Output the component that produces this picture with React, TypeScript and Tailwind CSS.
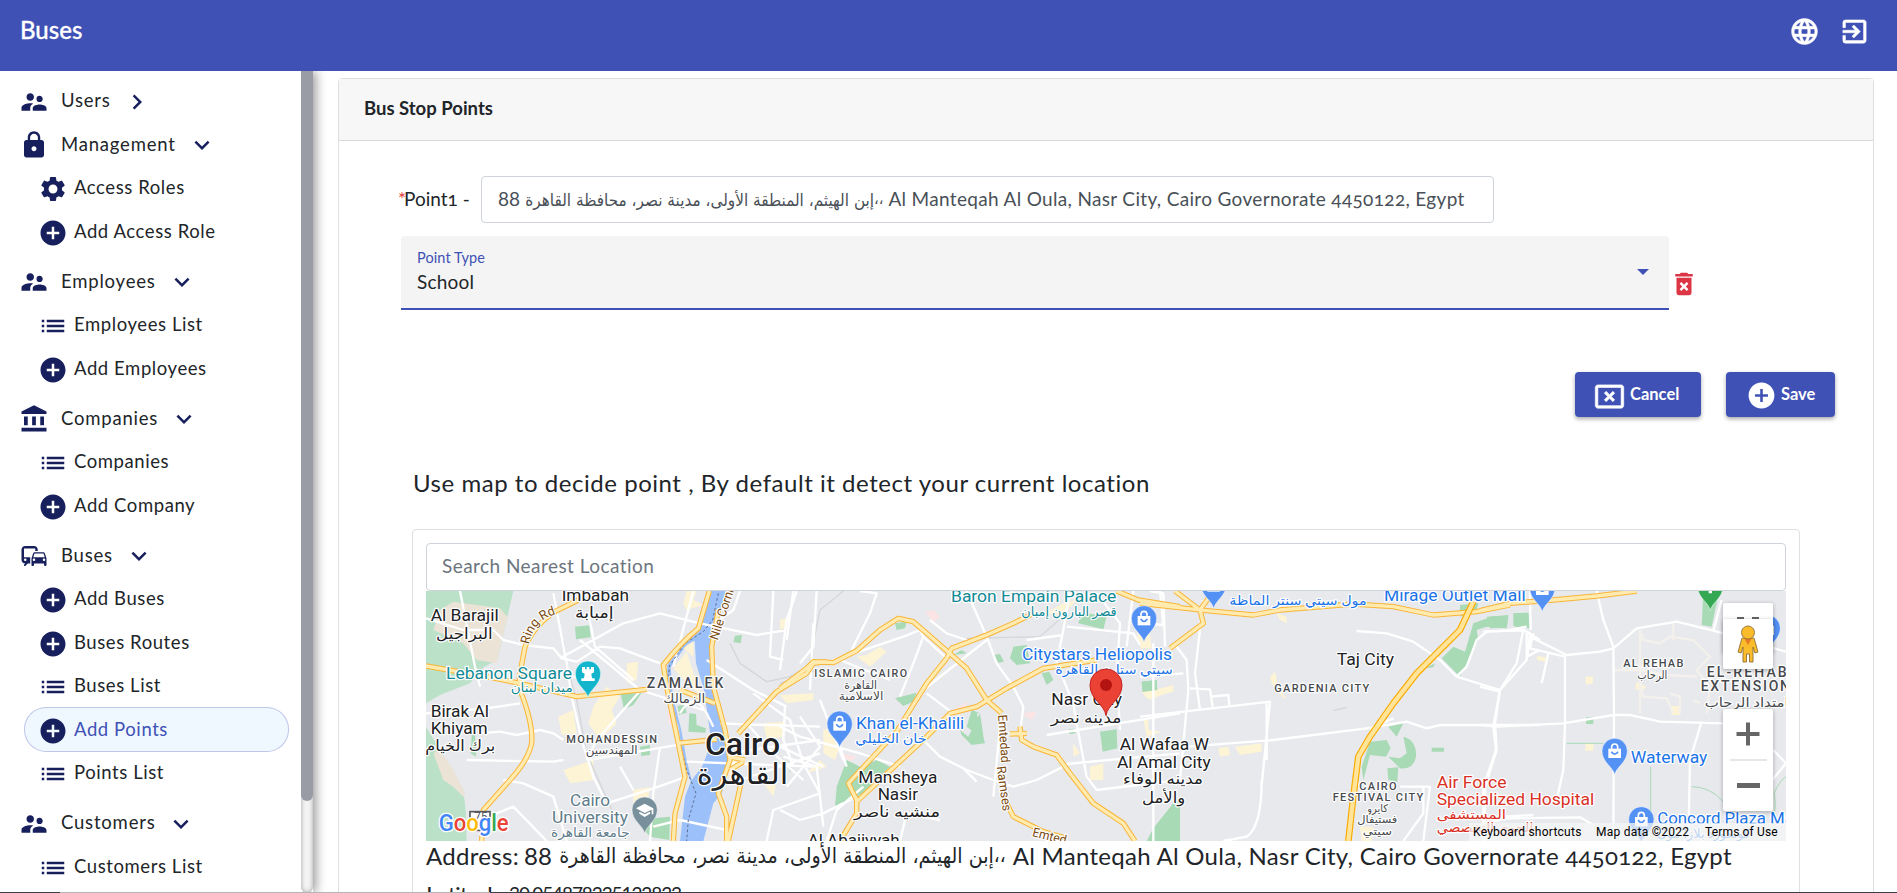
import React from "react";
import type { IconType } from "react-icons";
import {
  MdSupervisorAccount,
  MdLock,
  MdSettings,
  MdAddCircle,
  MdList,
  MdAccountBalance,
  MdCommute,
  MdExpandMore,
  MdChevronRight,
  MdLanguage,
  MdExitToApp,
  MdCancelPresentation,
  MdDeleteForever,
} from "react-icons/md";

type SubItem = { icon: IconType; label: string; active?: boolean };
type Group = { icon: IconType; label: string; open: boolean; items: SubItem[]; tight?: boolean };

const MENU: Group[] = [
  { icon: MdSupervisorAccount, label: "Users", open: false, items: [], tight: true },
  {
    icon: MdLock,
    label: "Management",
    open: true,
    tight: true,
    items: [
      { icon: MdSettings, label: "Access Roles" },
      { icon: MdAddCircle, label: "Add Access Role" },
    ],
  },
  {
    icon: MdSupervisorAccount,
    label: "Employees",
    open: true,
    items: [
      { icon: MdList, label: "Employees List" },
      { icon: MdAddCircle, label: "Add Employees" },
    ],
  },
  {
    icon: MdAccountBalance,
    label: "Companies",
    open: true,
    items: [
      { icon: MdList, label: "Companies" },
      { icon: MdAddCircle, label: "Add Company" },
    ],
  },
  {
    icon: MdCommute,
    label: "Buses",
    open: true,
    items: [
      { icon: MdAddCircle, label: "Add Buses" },
      { icon: MdAddCircle, label: "Buses Routes" },
      { icon: MdList, label: "Buses List" },
      { icon: MdAddCircle, label: "Add Points", active: true },
      { icon: MdList, label: "Points List" },
    ],
  },
  {
    icon: MdSupervisorAccount,
    label: "Customers",
    open: true,
    items: [{ icon: MdList, label: "Customers List" }],
  },
];

function Sidebar() {
  return (
    <aside className="z-10 flex h-[822px] w-[313px] shrink-0 bg-white shadow-[3px_0_10px_rgba(0,0,0,0.4)]">
      <nav className="h-full w-[301px] overflow-hidden pt-[8px] text-[18.5px] tracking-[0.8px] text-[#212529]">
        {MENU.map((g) => {
          const Chevron = g.open ? MdExpandMore : MdChevronRight;
          return (
            <div key={g.label} className={g.tight ? "" : "pt-[6.5px]"}>
              <div className="flex h-[43.5px] items-center pl-[19px]">
                <g.icon className="mt-[2px] size-[30px] text-[#17205c]" />
                <span className="-mt-[1px] ml-[12px] leading-[24px]">{g.label}</span>
                <Chevron className="ml-[11px] mt-[2px] size-[30px] text-[#17205c]" />
              </div>
              {g.items.map((it) => (
                <div
                  key={it.label}
                  className={
                    it.active
                      ? "ml-[25px] mr-[13px] flex h-[43.5px] items-center rounded-[21px] bg-[#eff7ff] pl-[12.5px] text-[#3f51b5] ring-1 ring-[#c0c6ea]"
                      : "flex h-[43.5px] items-center pl-[37.5px]"
                  }
                >
                  <it.icon className="mt-[3px] size-[30px] shrink-0 text-[#17205c]" />
                  <span className="-mt-[1px] ml-[6.5px] tracking-[0.58px] leading-[24px]">{it.label}</span>
                </div>
              ))}
            </div>
          );
        })}
      </nav>
      <div className="h-full w-[12px] rounded-b-md bg-[#f5f5f5] shadow-[inset_0_0_5px_#a0a0a0]">
        <div className="h-[730px] w-[12px] rounded-b-[6px] bg-[#9a9ca5]" />
      </div>
    </aside>
  );
}

const OFFSETS = [0, 1080, 2160, 3180];

const PARKS: string[] = [
  "M465 140L508 136 512 172 468 178ZM945 167L966 165 962 190 940 186ZM602 342L665 338 640 375 612 388ZM775 378L792 372 798 400 780 400ZM808 400L828 402 830 435 860 445 858 458 805 455ZM660 500L690 495 690 525 664 528ZM700 715L750 710 748 780 690 770 665 740ZM155 465L165 460 168 530 152 520ZM1105 545L1118 542 1110 580Z",
  "M345 355L410 338 400 365 370 378ZM200 540L240 560 290 540 330 560 250 640 165 678 170 620ZM540 450L565 470 600 400 590 400 615 490 575 495 545 465ZM575 390L600 400 612 480 560 440ZM345 130L380 125 375 145 350 150ZM905 97L980 110 970 148 895 130ZM700 200L740 195 750 250 710 255 690 235ZM785 280L808 275 820 300 800 315ZM640 225L660 222 672 245 655 248ZM1085 305L1130 300 1130 330 1088 335ZM960 455L1010 448 1012 505 968 515ZM865 448L886 446 886 460 868 462ZM1180 670L1200 660 1200 783 1105 783 1120 750ZM520 225L545 210 560 220Z",
  "M5 305L50 300 52 330 8 335ZM100 670L100 783 20 783 40 745ZM905 235L940 200 975 215 1000 130 1060 108 1105 112 1100 145 1040 140 1010 150 1015 180 960 290ZM1120 100L1165 100 1168 145 1120 138ZM690 485L740 480 752 505 738 530 690 525 670 600 665 560ZM790 470Q830 480 828 530 820 570 780 565L745 530 780 535 800 520ZM745 440L790 430 770 470ZM742 565L775 562 772 605 745 600ZM875 503L912 503 912 515 875 515ZM960 75L1015 70 1010 90 960 110ZM855 265L885 250 880 262Z",
  "M670 33L718 33 695 140 665 135ZM318 412L340 412 340 432 318 432ZM100 100L145 98 148 145 105 140ZM20 110L85 105 80 142 30 145Z",
];

const BLOCKS: string[] = [
  "M800 33L830 33 820 60 850 75 800 90 790 70ZM790 210L825 180 820 230ZM415 410L460 390 470 460 425 465ZM520 380L560 320 600 350 575 390 590 430 540 480 505 430ZM620 250L655 245 650 300 620 310ZM430 570L520 540 520 600 450 610ZM750 270L790 240 830 300 860 330 850 360 800 310ZM640 630L690 620 680 680 640 680ZM1030 430L1090 425 1090 470 1040 480ZM1030 610L1070 600 1060 650ZM920 480L955 560 930 620Z",
  "M230 230L260 225 300 200 320 215 270 260ZM0 120L30 110 20 140 0 150ZM130 450L160 440 180 500 165 540 130 520ZM930 560L970 550 970 600 930 600ZM1070 150L1110 150 1110 195 1075 190ZM1090 340L1180 315 1180 335 1120 350 1100 355ZM880 490L900 520 880 530ZM0 345L100 340 100 360 20 370ZM795 100L850 70 890 60 850 105ZM120 540L140 560 80 580Z",
  "M0 160L30 165 35 205 0 205ZM285 500L365 490 365 515 300 525ZM390 290L405 275 415 320 440 358 425 350 395 310ZM235 505L265 500 270 525 240 530ZM5 335L95 320 90 335 30 360ZM410 100L440 110 440 130 420 120ZM10 415L25 420 25 450 65 455 20 470ZM660 740L700 740 695 783 665 783Z",
  "M170 228L198 232 195 246 172 240ZM316 290L340 290 338 310 318 314ZM470 305L498 320 485 335 465 325ZM573 378L603 378 600 405 575 405ZM316 490L340 490 340 512 316 512Z",
];

const MINOR: string[] = [
  "M18 115L130 150 220 150 250 180 310 195 400 205 425 235 470 245 540 200 600 205 720 250 M400 40L440 250 455 350 485 480 520 590 555 660 M420 235L610 130 720 100 840 130 1010 165 1100 150 M18 400L200 385 300 370 M180 460L240 455 290 465 360 450 400 460 430 480 M140 540L400 545 430 540 M480 180L660 330 850 390 M505 100L525 200 640 300 M505 540L800 490 M660 333L530 480 500 540 M560 670L700 625 800 590 M720 500L700 640 690 783 M700 740L780 720 920 750 M820 33L760 260 M870 140L940 90 960 33 M860 240L1000 330 1100 380 M900 430L1200 440 M920 520L1200 480 M960 600L1200 520 M1060 33L1050 230 1090 240 M1130 33L1100 120 1080 270 M1000 340L1110 420 1150 550 1200 640 M980 430L1060 520 1150 600 M780 400Q820 330 860 400L880 440 M800 545L1180 560 M600 560L640 630 M180 720L280 680 380 783 M250 600L310 610 400 650 440 783 M120 33L165 260 180 320 M300 300L410 280 500 300 M1180 130L1170 330 M1040 783L1060 690 1200 640 M1095 380L1090 480 1120 560",
  "M240 33L290 40 270 100 215 210 M150 245L370 170 420 150 430 170 500 235 M450 120L500 160 560 180 M560 33L620 170 650 250 700 320 730 380 720 460 M870 33L850 150 830 250 880 370 890 430 920 590 950 630 1200 600 M860 140L1060 160 1080 195 M740 180L850 165 M950 40L1020 130 1010 280 1020 450 M1060 33L1040 200 M1140 33L1150 140 M800 465L1200 400 M860 552L1200 520 M430 170L400 250 360 350 M0 330L80 270 M0 440L60 470 240 520 360 560 M160 440L200 560 M120 360L190 540 M0 500L130 560 M60 410L120 500 20 620 M430 480L480 530 560 570 640 600 700 620 770 600 850 560 M550 565L590 605 M0 690L60 720 130 700 230 650 M140 783L170 690 250 620 M360 783L380 700 480 720 M110 33L100 200 60 250 M40 33L20 180 M440 340L520 400 M500 235L430 330 620 180 M180 240L330 300 M660 440L640 650 M10 530L110 560 130 740",
  "M190 60L165 280 180 390 M110 200L140 240 145 330 120 600 M0 410L390 365 365 615 M140 500L400 480 680 445 800 425 860 445 900 435 1080 435 1200 435 M650 153L740 160 820 185 900 240 950 290 1080 330 1065 430 1070 510 1035 620 1035 783 M150 325L210 328 218 380 M210 350L265 345 268 375 M365 600Q365 740 320 770L250 783 M1080 330L1130 250 1150 150 1200 180 M1150 150L1040 155 1010 180 980 260 950 290 M760 415L700 440 670 500 M780 620L870 620 850 783 M850 620L850 700 790 783 M30 33L70 40 75 200 M0 130L75 135 M40 190L40 783 M1110 150L1160 140 M1160 160L1160 230 1200 210 M380 365L380 540 M0 290L130 280 M940 710L1050 712 1180 705",
  "M350 33L370 120 400 200 402 410 400 783 M400 205L470 145 590 125 700 152 730 160 M400 205L360 215 260 225 150 170 M160 160L150 205 255 230 255 430 250 570 230 660 M205 220L185 310 M0 435L50 440 250 430 400 405 450 405 540 425 730 430 M665 425L630 540 625 783 M10 155L130 150 150 160 140 240 60 330 40 440 48 510 10 620 10 783 M700 152L725 60 M730 160L830 190 918 215 M880 510L918 550 860 620 M0 735L80 715 300 712 340 735 M0 320L60 335 M150 33L152 150",
];

const FAINT: string[] = [
  "M430 180L440 260 470 360 500 520 580 700 M930 190L960 250 1040 305 1110 290 1200 240",
  "M0 310L110 270 M190 33L120 90 90 240 M560 175L780 170 860 100",
  "M580 392L620 382",
  "",
];

const TRACKS: string[] = [
  "",
  "",
  "",
  "M480 150L490 180 540 190 570 170 640 180 690 230 650 270 690 320 680 400 M400 270L480 270 560 285 650 290 M480 310L490 350 560 355 580 400 M480 150L480 400 M580 130L580 180 M500 240L480 270 M640 360L660 370 M600 400L600 350 570 340",
];

const HIGHWAYS: string[] = [
  "M475 60L400 97Q340 140 315 200L298 290 300 330Q340 430 335 490 325 540 270 600L190 690 185 783 M18 258L200 290 300 310 470 350 680 328 M868 33L835 145Q780 190 730 255L740 320 750 370 775 490 795 590 765 700 760 783 M895 90L875 200 880 320 915 450 930 540 895 640 920 710 920 783 M780 330L885 370 M770 490L890 478 M955 460L1070 335 1160 280 1180 250 1220 245 M925 530L975 540 M965 600L925 783 M930 570L970 545",
  "M0 325L80 265 100 245 160 248 230 212 300 150 355 115 400 125 440 160 560 265 620 360 665 400 M500 235L515 205 620 165 700 130 760 100 M500 235L440 310 350 455 270 540 205 610 230 660 230 700 180 783 M230 665L440 470 510 400 590 380 680 325 790 265 950 240 M720 440L725 480 760 500 830 525 870 580 940 670 1030 730 1065 783 M690 462L740 460 M670 650L700 710 790 755 860 775 M1010 33L1075 60 1200 80",
  "M0 70L200 92 340 105 420 90 640 72 760 80 880 105 1010 95 1110 75 M105 33L180 90 190 130 90 205 M205 55L180 90 M1000 65L960 150 890 220 830 280 760 370 690 470 655 530 640 650 625 783",
  "M0 92L90 70 220 60 350 48 470 33",
];

const POIS: [number, number, string, string][] = [
  [504, 281, "#12b5cb", "rook"],
  [674, 689, "#78909c", "cap"],
  [1259, 431, "#5491f5", "bag"],
  [2172, 115, "#5491f5", "bag"],
  [2381, 14, "#5491f5", "bag"],
  [3367, 24, "#5491f5", "bag"],
  [3584, 513, "#5491f5", "bag"],
  [3664, 718, "#5491f5", "bag"],
  [3871, 20, "#34a853", "tree"],
  [4043, 144, "#5491f5", "bag"],
];

const GLYPHS: Record<string, string> = {
  rook: "M-18-20H-9V-13H-4V-20H4V-13H9V-20H18V-4L10 0 12 14H20V22H-20V14H-12L-10 0-18-4Z",
  cap: "M-26-4L0-18 26-4V14H21V0L0 10ZM-16 6L0 14 16 6V12L0 22-16 12Z",
  tree: "M0-10L18 12H5V20H-5V12H-18Z",
};

function Pin({ x, y, color, kind }: { x: number; y: number; color: string; kind: string }) {
  return (
    <g transform={`translate(${x} ${y})`}>
      <path d="M0 72C-4 48-38 34-38 0A38 38 0 1 1 38 0C38 34 4 48 0 72Z" fill={color} stroke="#ffffff" strokeOpacity=".5" strokeWidth="3" />
      {kind === "bag" ? (
        <g>
          <path d="M-9-5V-12A9 9 0 0 1 9-12V-5" fill="none" stroke="#fff" strokeWidth="5" />
          <path d="M-19-7H19V21H-19Z" fill="#fff" />
          <path d="M-10 2Q0 17 10 2" fill="none" stroke={color} strokeWidth="5" />
        </g>
      ) : (
        <path d={GLYPHS[kind]} fill="#fff" />
      )}
    </g>
  );
}

/* x, baseline, width, size, color, text, weight */
type Label = [number, number, number, number, string, string, number?];
const INK = "#202124";
const GREY = "#46494d";
const TEAL = "#118a96";
const BLUE = "#1a73e8";
const RED = "#d93025";

const LABELS: Label[] = [
  [32, 124, 204, 48, INK, "Al Barajil"],
  [48, 176, 170, 46, INK, "البراجيل"],
  [425, 62, 202, 48, INK, "Imbabah"],
  [465, 114, 116, 46, INK, "إمبابة"],
  [78, 296, 378, 47, TEAL, "Lebanon Square"],
  [272, 336, 186, 38, TEAL, "ميدان لبنان"],
  [680, 325, 230, 42, GREY, "ZAMALEK", 500],
  [730, 368, 126, 38, GREY, "الزمالك"],
  [32, 411, 175, 48, INK, "Birak Al"],
  [32, 463, 171, 48, INK, "Khiyam"],
  [16, 512, 210, 46, INK, "برك الخيام"],
  [439, 489, 272, 33, GREY, "MOHANDESSIN", 500],
  [497, 522, 156, 34, GREY, "المهندسين"],
  [855, 524, 225, 92, INK, "Cairo", 500],
  [830, 612, 275, 88, INK, "القاهرة"],
  [450, 677, 120, 47, "#607d8b", "Cairo"],
  [396, 729, 228, 47, "#607d8b", "University"],
  [393, 772, 236, 38, "#607d8b", "جامعة القاهرة"],
  [1593, 66, 496, 47, TEAL, "Baron Empain Palace"],
  [1804, 108, 286, 40, TEAL, "قصر البارون إمبان"],
  [1183, 291, 278, 32, GREY, "ISLAMIC CAIRO", 500],
  [1273, 326, 98, 34, GREY, "القاهرة"],
  [1256, 359, 134, 34, GREY, "الاسلامية"],
  [1308, 447, 325, 48, BLUE, "Khan el-Khalili"],
  [1306, 488, 214, 38, BLUE, "خان الخليلي"],
  [1315, 609, 237, 48, INK, "Mansheya"],
  [1373, 661, 121, 48, INK, "Nasir"],
  [1302, 711, 258, 46, INK, "منشيه ناصر"],
  [1163, 798, 276, 48, INK, "Al Abajiyyah"],
  [1806, 239, 450, 48, BLUE, "Citystars Heliopolis"],
  [1906, 282, 352, 38, BLUE, "سيتي ستارز القاهرة"],
  [1894, 376, 212, 48, INK, "Nasr City"],
  [1892, 430, 212, 46, INK, "مدينه نصر"],
  [2099, 510, 268, 48, INK, "Al Wafaa W"],
  [2091, 563, 281, 48, INK, "Al Amal City"],
  [2109, 612, 240, 46, INK, "مدينه الوفاء"],
  [2166, 668, 130, 46, INK, "والأمل"],
  [2428, 74, 412, 38, BLUE, "مول سيتي سنتر الماظة"],
  [2892, 63, 425, 47, BLUE, "Mirage Outlet Mall"],
  [2750, 256, 172, 48, INK, "Taj City"],
  [2563, 336, 285, 33, GREY, "GARDENIA CITY", 500],
  [2818, 629, 112, 33, GREY, "CAIRO", 500],
  [2738, 663, 272, 33, GREY, "FESTIVAL CITY", 500],
  [2842, 696, 62, 32, GREY, "كايرو"],
  [2812, 730, 120, 32, GREY, "فستيفال"],
  [2828, 764, 88, 32, GREY, "سيتي"],
  [3050, 623, 210, 48, RED, "Air Force"],
  [3050, 675, 473, 48, RED, "Specialized Hospital"],
  [3050, 716, 208, 38, RED, "المستشفى"],
  [3050, 756, 290, 38, RED, "الجوي التخصصي"],
  [3610, 262, 180, 33, GREY, "AL REHAB", 500],
  [3652, 296, 90, 34, GREY, "الرحاب"],
  [3860, 290, 240, 42, GREY, "EL-REHAB", 500],
  [3842, 334, 268, 42, GREY, "EXTENSION", 500],
  [3854, 380, 252, 38, GREY, "امتداد الرحاب"],
  [3632, 549, 230, 48, BLUE, "Waterway"],
  [3712, 732, 434, 47, BLUE, "Concord Plaza Mall"],
  [3712, 774, 278, 38, BLUE, "كونكورد بلازا مول"],
];

function Layer({ paths, ...rest }: { paths: string[] } & React.SVGProps<SVGGElement>) {
  return (
    <g {...rest}>
      {paths.map((d, i) => (
        <path key={i} d={d} transform={`translate(${OFFSETS[i]} 0)`} />
      ))}
    </g>
  );
}

function MapCanvas() {
  return (
    <svg viewBox="18 33 4080 750" className="block h-[250px] w-[1360px] font-['Roboto','DejaVu_Sans',sans-serif]">
      <rect x="18" y="33" width="4080" height="750" fill="#e8e9ed" />
      <path d="M18 33H280L262 110 232 240 190 262 150 310 60 345 18 370ZM18 440L60 510 90 560 130 630 138 700 140 783H18Z" fill="#bbe1c9" />
      <path d="M100 65L240 85 262 110 230 250 170 240 130 190 40 150 60 90ZM40 520L60 510 100 570 135 640 130 650 100 620 70 600Z" fill="#ebe3d6" />
      <Layer paths={BLOCKS} fill="#fdf3d5" />
      <Layer paths={PARKS} fill="#a8dab5" />
      <path d="M1515 95L1540 90 1560 110 1540 125ZM1610 385L1650 360 1620 400ZM1805 400L1850 395 1835 420ZM740 390L755 400 758 440 745 430ZM1260 520L1310 530 1290 545Z" fill="#fce4e4" />
      <path
        d="M868 33H918L895 120 878 150 872 250 885 330 905 430 922 480 928 560 905 640 880 670 850 783H780L795 650 812 605 790 540 775 440 750 370 740 300 742 255 790 190 835 155 850 110Z"
        fill="#9cc0f9"
      />
      <path d="M752 262L800 195 824 182 828 250 852 330 862 400 872 470 862 520 846 560 815 600 800 540 784 450 759 350Z" fill="#e8e9ed" />
      <path d="M808 400L828 402 830 435 858 445 856 458 805 455ZM772 378L794 374 800 398 778 404Z" fill="#a8dab5" />
      <path d="M760 265L800 215 824 290 848 350 800 310ZM790 205L820 184 820 230Z" fill="#fdf3d5" />
      <Layer paths={TRACKS} fill="none" stroke="#f4f1ec" strokeWidth="7" />
      <Layer paths={FAINT} fill="none" stroke="#d4d6da" strokeWidth="4" />
      <Layer paths={MINOR} fill="none" stroke="#ffffff" strokeWidth="7" strokeLinejoin="round" />
      <path d="M3440 490H3550M3692 560V720M3815 620Q3870 620 3910 665M4062 640Q4080 600 4098 590M4062 640Q4070 670 4060 720" fill="none" stroke="#a8dab5" strokeWidth="3" />
      <path d="M895 40L878 120 850 155 795 190 748 258 745 320 765 430 800 570 828 640 805 720 800 783" fill="none" stroke="#5f6f92" strokeWidth="3" strokeDasharray="8 7" />
      <Layer paths={HIGHWAYS} fill="none" stroke="#f9b536" strokeWidth="16" strokeLinejoin="round" />
      <Layer paths={HIGHWAYS} fill="none" stroke="#ffebb0" strokeWidth="10" strokeLinejoin="round" />
      <path d="M3160 65L3120 150 3050 220 2990 280 2920 370 2850 470 2815 530 2800 650 2785 783" fill="none" stroke="#f9ab00" strokeWidth="20" strokeLinejoin="round" />
      <path d="M3160 65L3120 150 3050 220 2990 280 2920 370 2850 470 2815 530 2800 650 2785 783" fill="none" stroke="#ffe49a" strokeWidth="13" strokeLinejoin="round" />
      <rect x="150" y="695" width="60" height="56" fill="#fff" stroke="#55595e" strokeWidth="5" />
      {POIS.map(([x, y, color, kind]) => (
        <Pin key={`${x}-${y}`} x={x} y={y} color={color} kind={kind} />
      ))}
      <g paintOrder="stroke" stroke="#ffffff" strokeWidth="7" strokeLinejoin="round">
        <text x="162" y="724" fontSize="36" fill="#55595e" strokeWidth="0">75</text>
        {LABELS.map(([x, y, w, s, c, t, wt]) => (
          <text
            key={`${x}-${y}`}
            x={x}
            y={y}
            fontSize={s}
            fill={c}
            fontWeight={wt ?? 400}
            textLength={w}
            lengthAdjust={wt && s < 60 ? "spacing" : "spacingAndGlyphs"}
          >
            {t}
          </text>
        ))}
        <path id="ring-road-label" d="M327 194Q340 125 400 105" fill="none" stroke="none" />
        <g fill="#7a4a12" fontSize="38">
          <text>
            <textPath href="#ring-road-label">Ring Rd</textPath>
          </text>
          <text transform="translate(893 182) rotate(-72)" textLength="158" lengthAdjust="spacingAndGlyphs">Nile Corni</text>
          <text transform="translate(1734 405) rotate(86)" textLength="144" lengthAdjust="spacingAndGlyphs">Emtedad</text>
          <text transform="translate(1730 560) rotate(82)" textLength="136" lengthAdjust="spacingAndGlyphs">Ramses</text>
          <text transform="translate(1835 768) rotate(14)" textLength="104" lengthAdjust="spacingAndGlyphs">Emted</text>
        </g>
        <text x="56" y="753" fontSize="70" fontWeight="500" strokeWidth="8" textLength="210" lengthAdjust="spacingAndGlyphs">
          <tspan fill="#4285f4">G</tspan>
          <tspan fill="#ea4335">o</tspan>
          <tspan fill="#fbbc04">o</tspan>
          <tspan fill="#4285f4">g</tspan>
          <tspan fill="#34a853">l</tspan>
          <tspan fill="#ea4335">e</tspan>
        </text>
      </g>
      <g transform="translate(2058 315)">
        <path d="M0 92C-4 58-48 44-48 0A48 48 0 1 1 48 0C48 44 4 58 0 92Z" fill="#ea4335" stroke="#c5221f" strokeWidth="3" />
        <circle r="18" fill="#b31412" />
      </g>
    </svg>
  );
}

function MapControls() {
  return (
    <>
      <div className="absolute left-[1297px] top-[12px] h-[50px] w-[50px] rounded-[2px] bg-white shadow-[0_1px_4px_rgba(0,0,0,0.3)]">
        <div className="mt-[14px] flex justify-between px-[14px]">
          <span className="h-[3px] w-[7px] bg-[#666]" />
          <span className="h-[3px] w-[7px] bg-[#666]" />
        </div>
      </div>
      <div className="absolute left-[1297px] top-[28px] flex h-[50px] w-[50px] items-center justify-center rounded-[2px] bg-white shadow-[0_1px_4px_rgba(0,0,0,0.3)]">
        <svg viewBox="0 0 22 38" className="h-[38px] w-[22px]">
          <path d="M5 13H17L21 27 18 28 16 22V37H12.500V29H9.500V37H6V22L4 28 1 27Z" fill="#fbbc2c" stroke="#8f7133" strokeWidth=".9" strokeLinejoin="round" />
          <path d="M7 13H15L11 20Z" fill="#e57b25" />
          <circle cx="11" cy="7.500" r="6.500" fill="#fbbc2c" stroke="#8f7133" strokeWidth=".9" />
        </svg>
      </div>
      <div className="absolute left-[1297px] top-[118px] flex h-[102px] w-[50px] flex-col items-center rounded-[2px] bg-white shadow-[0_1px_4px_rgba(0,0,0,0.3)]">
        <svg viewBox="0 0 24 24" className="mt-[13px] size-[24px]">
          <path d="M.5 10H10V.5H14V10H23.500V14H14V23.500H10V14H.5Z" fill="#666" />
        </svg>
        <div className="mt-[13px] h-[2px] w-[37px] bg-[#e6e6e6]" />
        <div className="mt-[22px] h-[5px] w-[23px] bg-[#666]" />
      </div>
      <div className="absolute bottom-0 right-0 flex h-[18px] items-center whitespace-nowrap bg-[#f5f5f5]/75 pl-[4px] pr-[8px] font-['Roboto',sans-serif] text-[12px] leading-[18px] text-black">
        <span className="w-[123px] tracking-[0.25px]">Keyboard shortcuts</span>
        <span className="w-[109px] tracking-[0.25px]">Map data ©2022</span>
        <span className="w-[73px] tracking-[0.15px]">Terms of Use</span>
      </div>
    </>
  );
}

function Address({ arabicClass }: { arabicClass: string }) {
  return (
    <>
      <span>88</span>
      <span dir="rtl" className={arabicClass}>إبن الهيثم، المنطقة الأولى، مدينة نصر، محافظة القاهرة</span>
      <span className="font-['DejaVu_Sans_Condensed','DejaVu_Sans',sans-serif] text-[0.85em] tracking-normal">،،</span>
    </>
  );
}

const ENGLISH = "Al Manteqah Al Oula, Nasr City, Cairo Governorate 4450122, Egypt";

export default function App() {
  return (
    <div className="flex h-[893px] w-[1897px] flex-col overflow-hidden bg-white font-['Lato','DejaVu_Sans',sans-serif] text-[#212529]">
      <header className="flex h-[71px] shrink-0 items-start justify-between bg-[#3f51b5] text-white">
        <h1 className="ml-[20px] mt-[15px] text-[24px] font-medium leading-[30px] [-webkit-text-stroke:0.3px_white]">Buses</h1>
        <div className="mr-[27px] mt-[16px] flex gap-[19px]">
          <MdLanguage className="size-[31px] stroke-white stroke-[0.4] [&>path[fill=none]]:stroke-none" />
          <MdExitToApp className="size-[31px] stroke-white stroke-[0.4] [&>path[fill=none]]:stroke-none" />
        </div>
      </header>

      <div className="flex h-[821px] shrink-0 overflow-hidden">
        <Sidebar />
        <main className="ml-[25px] mt-[7px] flex h-[900px] w-[1536px] shrink-0 flex-col rounded-t-[4px] border border-[#dfdfdf]">
          <div className="flex h-[62px] shrink-0 items-center border-b border-[#d9d9d9] bg-[#f7f7f7] pb-[2px] pl-[25px] text-[18.5px] font-bold">
            Bus Stop Points
          </div>

          <section className="ml-[59px] mt-[35px] flex items-center whitespace-nowrap">
            <div className="w-[83px] text-[19px] [font-feature-settings:'onum']">
              <span className="text-[#e53935]">*</span>
              <span className="-ml-[2px]">Point1 -</span>
            </div>
            <div className="flex h-[47px] w-[1013px] items-center rounded-[4px] border border-[#ced4da] pl-[16px] text-[19px] text-[#495057]">
              <Address arabicClass="ml-[5px] w-[349px] font-['DejaVu_Sans_Condensed','DejaVu_Sans',sans-serif] text-[17px] leading-[24px]" />
              <span className="ml-[5px] tracking-[0.33px] [font-feature-settings:'onum']">{ENGLISH}</span>
            </div>
          </section>

          <section className="ml-[62px] mt-[13px] flex items-end">
            <div className="flex h-[74px] w-[1268px] items-center justify-between rounded-t-[4px] border-b-2 border-[#3f51b5] bg-[#f4f4f4] pl-[16px] pr-[20px]">
              <div>
                <div className="text-[14.5px] leading-[20px] tracking-[0.1px] text-[#3f51b5]">Point Type</div>
                <div className="mt-[1px] pb-px text-[19px] leading-[26px] tracking-[0.2px]">School</div>
              </div>
              <svg viewBox="0 0 12 6" className="h-[6px] w-[12px]">
                <path d="M0 0H12L6 6Z" fill="#3f51b5" />
              </svg>
            </div>
            <MdDeleteForever className="mb-[11px] size-[30px] text-[#dc3545]" />
          </section>

          <section className="mr-[38px] mt-[62px] flex justify-end gap-[25px] text-[16.5px] font-bold text-white">
            <button className="flex h-[45px] w-[126px] items-center rounded-[4px] bg-[#3f51b5] pl-[19px] shadow-[0_2px_4px_rgba(0,0,0,0.35)]">
              <MdCancelPresentation className="mt-[3px] size-[31px] stroke-white stroke-[0.5] [&>path[fill=none]]:stroke-none" />
              <span className="ml-[5px]">Cancel</span>
            </button>
            <button className="flex h-[45px] w-[109px] items-center rounded-[4px] bg-[#3f51b5] pl-[20px] shadow-[0_2px_4px_rgba(0,0,0,0.35)]">
              <MdAddCircle className="mt-[1px] size-[31px]" />
              <span className="ml-[4px]">Save</span>
            </button>
          </section>

          <p className="ml-[74px] mt-[50px] text-[24px] leading-[32px] tracking-[0.54px]">
            Use map to decide point , By default it detect your current location
          </p>

          <section className="ml-[73px] mt-[30px] flex h-[420px] w-[1388px] shrink-0 flex-col rounded-t-[4px] border border-[#dfdfdf] pl-[13px] pt-[13px]">
            <div className="flex h-[48px] w-[1360px] shrink-0 items-center rounded-[4px] border border-[#ced4da] pb-[2px] pl-[15px] text-[19px] tracking-[0.45px] text-[#6c757d]">
              Search Nearest Location
            </div>
            <div className="relative h-[250px] w-[1360px] shrink-0 overflow-hidden">
              <MapCanvas />
              <MapControls />
            </div>
            <div className="flex h-[29px] items-center whitespace-nowrap text-[24px] leading-[29px]">
              <span className="w-[98px] tracking-[0.3px]">Address:</span>
              <Address arabicClass="ml-[6px] w-[436px] font-['DejaVu_Sans_Condensed','DejaVu_Sans',sans-serif] text-[21.2px] leading-[29px]" />
              <span className="ml-[7px] tracking-[0.28px] [font-feature-settings:'onum']">{ENGLISH}</span>
            </div>
            <div className="mt-[9px] flex items-start whitespace-nowrap text-[24px] leading-[32px]">
              <span className="w-[83px] tracking-[-1.2px]">Latitude:</span>
              <span className="text-[19px] leading-[30px] tracking-[-1.1px]">30.054878335122833</span>
            </div>
          </section>
        </main>
      </div>
      <div className="flex h-px shrink-0">
        <div className="w-[60px] bg-[#3a3f4a]" />
        <div className="w-[430px] bg-[#b5b5b5]" />
        <div className="grow bg-[#3a3f4a]" />
      </div>
    </div>
  );
}
